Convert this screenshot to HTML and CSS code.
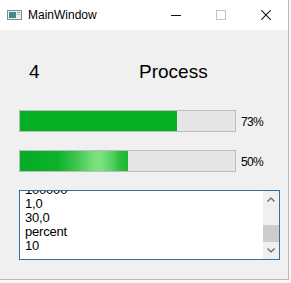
FILE: index.html
```html
<!DOCTYPE html>
<html>
<head>
<meta charset="utf-8">
<link rel="stylesheet" href="styles.css">
</head>
<body>
<div class="window">
  <div class="titlebar">
    <svg class="appicon" width="15" height="10" viewBox="0 0 15 10">
      <rect x="0.5" y="0.5" width="14" height="9" fill="#e9eef1" stroke="#7f8c94"/>
      <rect x="2" y="2" width="7" height="6" fill="#3f8b86"/>
      <rect x="10" y="2" width="3" height="1" fill="#9aa7ae"/>
      <rect x="10" y="4" width="3" height="1" fill="#b5c0c6"/>
    </svg>
    <span class="title">MainWindow</span>
    <div class="controls">
      <div class="ctl">
        <svg width="10" height="10" viewBox="0 0 10 10"><line x1="0" y1="5.5" x2="10" y2="5.5" stroke="#111" stroke-width="1"/></svg>
      </div>
      <div class="ctl">
        <svg width="10" height="10" viewBox="0 0 10 10"><rect x="0.5" y="0.5" width="9" height="9" fill="none" stroke="#c4c4c4" stroke-width="1"/></svg>
      </div>
      <div class="ctl">
        <svg width="10" height="10" viewBox="0 0 10 10"><path d="M0.3 0.3 L9.7 9.7 M9.7 0.3 L0.3 9.7" stroke="#111" stroke-width="1.05" fill="none"/></svg>
      </div>
    </div>
  </div>
  <div class="client">
    <div class="heading">
      <span class="num">4</span>
      <span class="label">Process</span>
    </div>
    <div class="progress-row first">
      <div class="bar"><div class="fill" style="width:73%"></div></div>
      <span class="pct">73%</span>
    </div>
    <div class="progress-row">
      <div class="bar"><div class="fill shimmer" style="width:50%"></div></div>
      <span class="pct">50%</span>
    </div>
    <div class="textbox">
      <div class="lines">
        <div class="lines-inner">
          <div>100000</div>
          <div>1,0</div>
          <div>30,0</div>
          <div>percent</div>
          <div>10</div>
        </div>
      </div>
      <div class="scrollbar">
        <div class="sb-btn">
          <svg width="8" height="5" viewBox="0 0 8 5"><polyline points="0.5,4.5 4,1 7.5,4.5" fill="none" stroke="#606060" stroke-width="1.2"/></svg>
        </div>
        <div class="sb-track"><div class="thumb"></div></div>
        <div class="sb-btn">
          <svg width="8" height="5" viewBox="0 0 8 5"><polyline points="0.5,0.5 4,4 7.5,0.5" fill="none" stroke="#606060" stroke-width="1.2"/></svg>
        </div>
      </div>
    </div>
  </div>
</div>
</body>
</html>
```

FILE: styles.css
```css
* { box-sizing: border-box; }

body {
  margin: 0;
  width: 291px;
  height: 283px;
  overflow: hidden;
  background: #f7f7f7;
  font-family: "Liberation Sans", Arial, sans-serif;
  color: #000;
}

.window {
  width: 289px;
  height: 280px;
  background: #f0f0f0;
  border-right: 1px solid #b9b9b9;
  border-bottom: 1px solid #b9b9b9;
  display: flex;
  flex-direction: column;
}

.titlebar {
  height: 30px;
  flex: none;
  background: #fff;
  display: flex;
  align-items: center;
}

.appicon {
  margin-left: 7px;
  display: block;
}

.title {
  margin-left: 6px;
  font-size: 12px;
  color: #000;
}

.controls {
  margin-left: auto;
  display: flex;
}

.ctl {
  width: 45px;
  height: 30px;
  display: flex;
  align-items: center;
  justify-content: center;
}

.ctl svg { display: block; }

.client {
  flex: 1;
  padding: 31px 0 0 19px;
  display: flex;
  flex-direction: column;
}

.heading {
  display: flex;
  height: 22px;
  line-height: 22px;
  font-size: 19px;
  padding-left: 10px;
}

.num { width: 110px; }

.progress-row {
  display: flex;
  align-items: center;
  margin-top: 18px;
}

.progress-row.first { margin-top: 27px; }

.bar {
  width: 217px;
  height: 22px;
  border: 1px solid #bcbcbc;
  background: #e6e6e6;
}

.fill {
  height: 100%;
  background: #06b025;
}

.fill.shimmer {
  background: linear-gradient(to right,
    #06ac24 0px,
    #0db22b 38px,
    #3fc550 56px,
    #78e07c 74px,
    #7ee283 80px,
    #52cf60 93px,
    #2bbd3f 100px,
    #1fb835 107px);
}

.pct {
  margin-left: 5px;
  font-size: 12px;
  letter-spacing: -0.7px;
  padding-top: 1px;
}

.textbox {
  margin-top: 18px;
  width: 261px;
  height: 70px;
  border: 1px solid #34709f;
  background: #fff;
  display: flex;
}

.lines {
  flex: 1;
  overflow: hidden;
  padding-left: 5px;
  font-size: 13px;
  line-height: 14px;
  letter-spacing: -0.2px;
}

.lines-inner { margin-top: -8px; }

.scrollbar {
  width: 16px;
  background: #f0f0f0;
  display: flex;
  flex-direction: column;
}

.sb-btn {
  height: 17px;
  display: flex;
  align-items: center;
  justify-content: center;
}

.sb-btn svg { display: block; }

.sb-track { flex: 1; }

.thumb {
  margin-top: 17px;
  height: 17px;
  background: #cdcdcd;
}
```
